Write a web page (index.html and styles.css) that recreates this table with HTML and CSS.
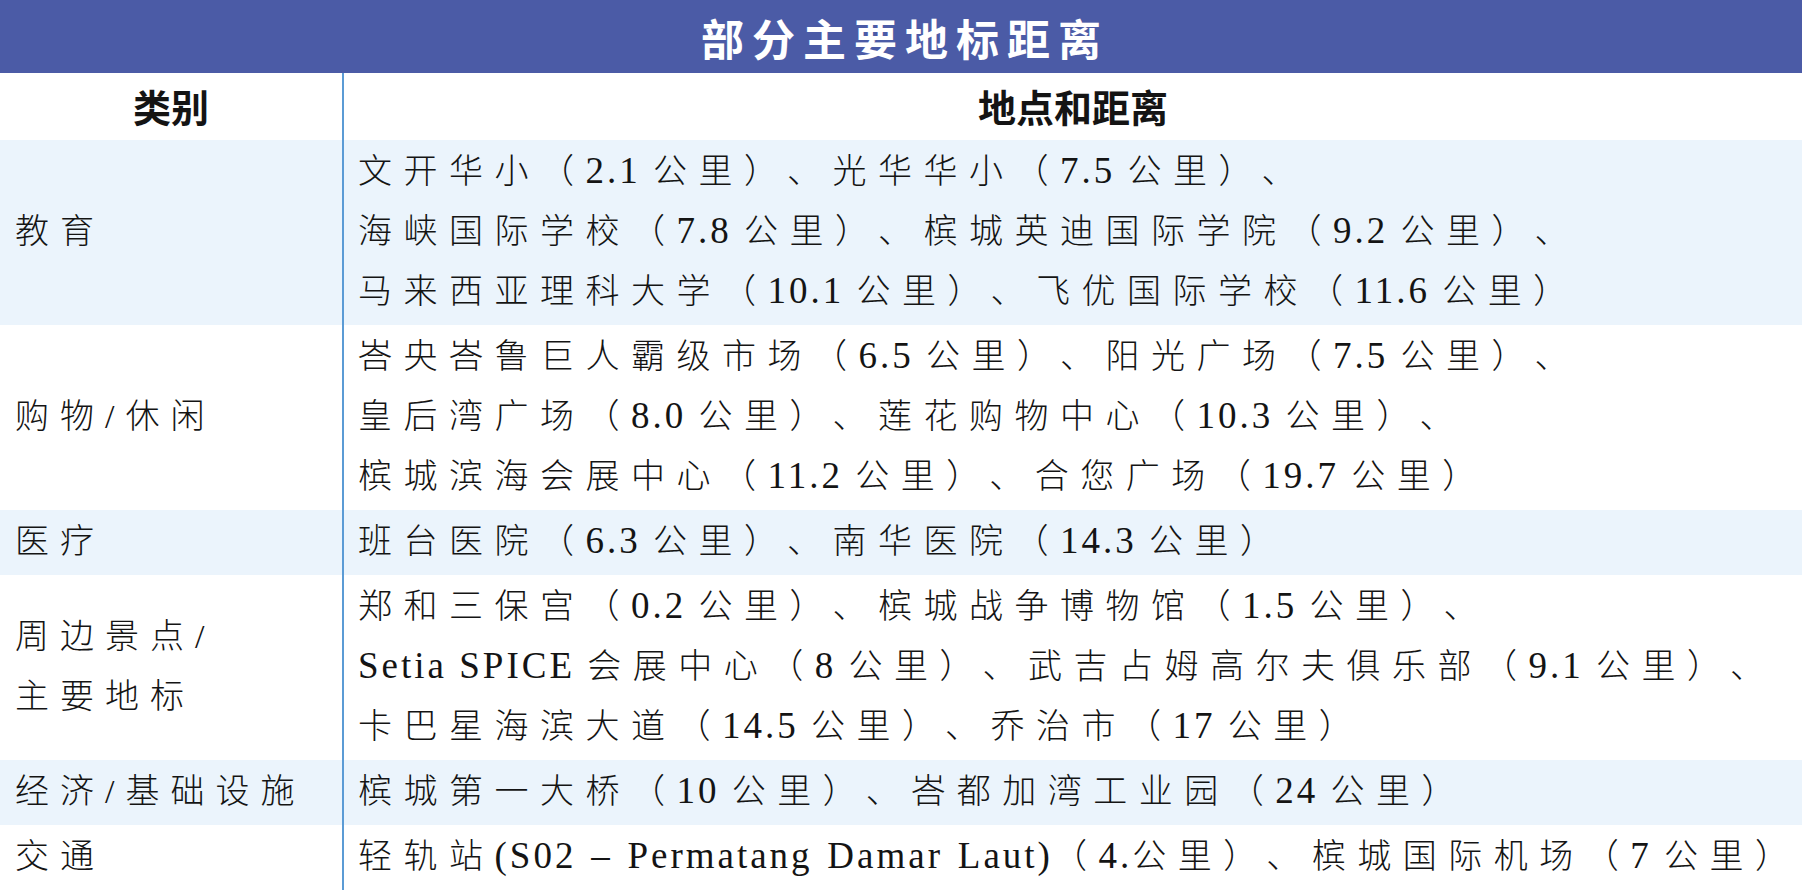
FILE: index.html
```html
<!DOCTYPE html>
<html lang="zh-CN">
<head>
<meta charset="utf-8">
<title>部分主要地标距离</title>
<link rel="stylesheet" href="styles.css">
</head>
<body>
<div class="sheet">
  <div class="title">部分主要地标距离</div>
  <div class="row head">
    <div class="cat">类别</div>
    <div class="info">地点和距离</div>
  </div>
  <div class="row tint">
    <div class="cat">教育</div>
    <div class="info">文开华小（<span class="n">2.1 </span>公里<span class="rp">）</span>、光华华小（<span class="n">7.5 </span>公里<span class="rp">）</span>、<br>海峡国际学校（<span class="n">7.8 </span>公里<span class="rp">）</span>、槟城英迪国际学院（<span class="n">9.2 </span>公里<span class="rp">）</span>、<br>马来西亚理科大学（<span class="n">10.1 </span>公里<span class="rp">）</span>、飞优国际学校（<span class="n">11.6 </span>公里）</div>
  </div>
  <div class="row">
    <div class="cat">购物/休闲</div>
    <div class="info">峇央峇鲁巨人霸级市场（<span class="n">6.5 </span>公里<span class="rp">）</span>、阳光广场（<span class="n">7.5 </span>公里<span class="rp">）</span>、<br>皇后湾广场（<span class="n">8.0 </span>公里<span class="rp">）</span>、莲花购物中心（<span class="n">10.3 </span>公里<span class="rp">）</span>、<br>槟城滨海会展中心（<span class="n">11.2 </span>公里<span class="rp">）</span>、合您广场（<span class="n">19.7 </span>公里）</div>
  </div>
  <div class="row tint">
    <div class="cat">医疗</div>
    <div class="info">班台医院（<span class="n">6.3 </span>公里<span class="rp">）</span>、南华医院（<span class="n">14.3 </span>公里）</div>
  </div>
  <div class="row">
    <div class="cat">周边景点/<br>主要地标</div>
    <div class="info">郑和三保宫（<span class="n">0.2 </span>公里<span class="rp">）</span>、槟城战争博物馆（<span class="n">1.5 </span>公里<span class="rp">）</span>、<br><span class="n">Setia SPICE </span>会展中心（<span class="n">8 </span>公里<span class="rp">）</span>、武吉占姆高尔夫俱乐部（<span class="n">9.1 </span>公里<span class="rp">）</span>、<br>卡巴星海滨大道（<span class="n">14.5 </span>公里<span class="rp">）</span>、乔治市（<span class="n">17 </span>公里）</div>
  </div>
  <div class="row tint">
    <div class="cat">经济/基础设施</div>
    <div class="info">槟城第一大桥（<span class="n">10 </span>公里<span class="rp">）</span>、峇都加湾工业园（<span class="n">24 </span>公里）</div>
  </div>
  <div class="row">
    <div class="cat">交通</div>
    <div class="info">轻轨站<span class="n wide">(S02 – Permatang Damar Laut)</span>（<span class="n">4.</span>公里<span class="rp">）</span>、槟城国际机场（<span class="n">7 </span>公里<span class="end">）</span></div>
  </div>
</div>
</body>
</html>
```

FILE: styles.css
```css
html, body {
  margin: 0;
  padding: 0;
  background: #ffffff;
}

.sheet {
  width: 1802px;
  height: 890px;
  overflow: hidden;
  font-family: "Liberation Serif", "Noto Sans CJK SC", serif;
  color: #141414;
}

.title {
  height: 73px;
  background: #4b5ba6;
  color: #ffffff;
  font-family: "Noto Sans CJK SC", sans-serif;
  font-weight: 700;
  font-size: 43px;
  letter-spacing: 8px;
  display: flex;
  align-items: center;
  justify-content: center;
  padding-left: 8px;
}

.row {
  display: grid;
  grid-template-columns: 342px 1fr;
  background: #ffffff;
}

.row.tint {
  background: #ebf4fc;
}

.cat {
  display: flex;
  align-items: center;
  padding: 2px 0 3px 15px;
  font-size: 34px;
  font-weight: 300;
  letter-spacing: 11px;
  line-height: 60px;
}

.info {
  border-left: 2px solid #5b9bd5;
  padding: 2px 0 3px 14px;
  font-size: 34px;
  font-weight: 300;
  letter-spacing: 11.5px;
  line-height: 60px;
  white-space: nowrap;
  min-width: 0;
}

.n {
  font-family: "Liberation Serif", serif;
  font-weight: 400;
  font-size: 37px;
  line-height: 1;
  letter-spacing: 3px;
}

.n.wide {
  word-spacing: 2.5px;
}

.rp {
  letter-spacing: 26px;
}

.end {
  letter-spacing: 0;
}

.head .cat,
.head .info {
  justify-content: center;
  text-align: center;
  padding: 3px 0 4px 0;
  font-family: "Noto Sans CJK SC", sans-serif;
  font-weight: 700;
  font-size: 38px;
  letter-spacing: 0;
}
```
